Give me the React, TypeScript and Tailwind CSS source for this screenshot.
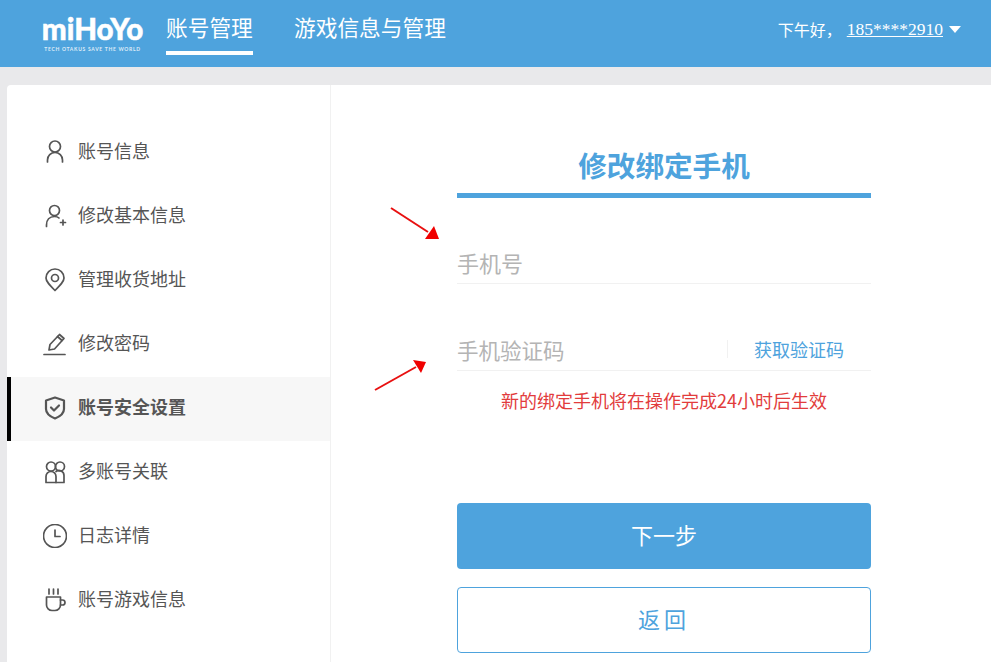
import type { ReactNode } from "react";

const cjk = "font-['Noto_Sans_CJK_SC','Noto_Sans',sans-serif]";

function Icon({ children }: { children: ReactNode }) {
  return (
    <svg
      className="w-6 h-6 shrink-0 text-[#555]"
      viewBox="0 0 24 24"
      fill="none"
      stroke="currentColor"
      strokeWidth="1.7"
      strokeLinecap="round"
      strokeLinejoin="round"
    >
      {children}
    </svg>
  );
}

const navItems: { label: string; active?: boolean; icon: ReactNode }[] = [
  {
    label: "账号信息",
    icon: (
      <>
        <circle cx="12" cy="6.5" r="5.5" />
        <path d="M4.5 22v-2a7.5 7.5 0 0 1 15 0v2" />
      </>
    ),
  },
  {
    label: "修改基本信息",
    icon: (
      <>
        <circle cx="11.5" cy="6.5" r="5" />
        <path d="M3.5 22.5v-1.5c0-5 3-8.5 8-8.5 2 0 3.5.5 4.5 1.5" />
        <path d="M17.5 18.5h5M20 16v5" />
      </>
    ),
  },
  {
    label: "管理收货地址",
    icon: (
      <>
        <path d="M12 22.5C6.5 17 3 13.5 3 10a9 9 0 0 1 18 0c0 3.5-3.5 7-9 12.5z" />
        <circle cx="12" cy="10" r="3.5" />
      </>
    ),
  },
  {
    label: "修改密码",
    icon: (
      <>
        <path d="M1 22.5h21" />
        <path d="M6 18l1-5.500L16.500 2.500l4.500 4-9.500 10.500z" />
        <path d="M14.500 4.500l4.500 4" />
      </>
    ),
  },
  {
    label: "账号安全设置",
    active: true,
    icon: (
      <g strokeWidth="2.2">
        <path d="M12 1.500l9 3v8.500c0 4.500-4 7.500-9 9.500-5-2-9-5-9-9.500V4.500z" />
        <path d="M8 11.500l3 3 5-5" />
      </g>
    ),
  },
  {
    label: "多账号关联",
    icon: (
      <>
        <circle cx="8" cy="6.500" r="4.500" />
        <circle cx="17" cy="6.500" r="4.500" />
        <path d="M3 22.500v-6a5 5 0 0 1 10 0v6z" />
        <path d="M13 11.500a5 5 0 0 1 8 4v7h-8" />
      </>
    ),
  },
  {
    label: "日志详情",
    icon: (
      <>
        <circle cx="12" cy="12" r="11.5" />
        <path d="M12 6v6.5h5" />
      </>
    ),
  },
  {
    label: "账号游戏信息",
    icon: (
      <>
        <path d="M3.5 9h14v8a5.5 5.5 0 0 1-5.500 5.500H9A5.500 5.500 0 0 1 3.500 17z" />
        <path d="M17.500 12h2a2 2 0 0 1 0 5h-2" />
        <path d="M6 1v5M10.500 1v5M15 1v5" />
      </>
    ),
  },
];

function NavRow({ label, icon, active }: { label: string; icon: ReactNode; active?: boolean }) {
  return (
    <li
      className={`h-16 flex items-center pb-[2px] gap-[11px] text-[18px] text-[#555] ${
        active ? "bg-[#f7f7f7] border-l-4 border-black pl-[32px] font-bold" : "pl-[36px]"
      }`}
    >
      {icon}
      <span className="mb-[4px]">{label}</span>
    </li>
  );
}

function Logo() {
  return (
    <div className="w-[99px] flex flex-col items-center text-white">
      <span className="font-['Lato',sans-serif] font-black text-[29.5px] leading-[29px] [-webkit-text-stroke:0.5px_white]">
        miHoYo
      </span>
      <span className="mt-[4px] font-['Lato',sans-serif] font-bold text-[5px] leading-[5px] tracking-[0.7px] whitespace-nowrap opacity-80">
        TECH OTAKUS SAVE THE WORLD
      </span>
    </div>
  );
}

export default function App() {
  return (
    <div className={`w-[991px] h-[662px] overflow-hidden bg-[#e9e9eb] ${cjk}`}>
      {/* Header */}
      <header className="h-[67px] bg-[#4ea3dd] flex items-start text-white pl-[43px] pr-[30px]">
        <div className="mt-[14px]">
          <Logo />
        </div>
        <nav className="flex ml-[24px] text-[21.7px] gap-[41px]">
          <div className="flex flex-col w-[87px] whitespace-nowrap">
            <span className="leading-[30px] mt-[12px]">账号管理</span>
            <span className="h-1 bg-white mt-[9px]" />
          </div>
          <span className="leading-[30px] mt-[12px] whitespace-nowrap">游戏信息与管理</span>
        </nav>
        <div className="ml-auto flex items-center mt-[17px] h-6">
          <span className="text-[16px]">下午好，</span>
          <span className="underline font-['Liberation_Serif',serif] text-[17.5px] ml-[5px]">185****2910</span>
          <span className="ml-[6px] w-0 h-0 border-x-[6px] border-x-transparent border-t-[7px] border-t-white" />
        </div>
      </header>

      {/* Card */}
      <div className="mt-[18px] ml-[7px] h-[577px] bg-white rounded-tl-[4px] flex">
        <aside className="w-[324px] shrink-0 border-r border-[#f1f1f1] pt-9">
          <ul>
            {navItems.map((item) => (
              <NavRow key={item.label} label={item.label} active={item.active} icon={<Icon>{item.icon}</Icon>} />
            ))}
          </ul>
        </aside>

        <main className="relative flex-1">
          {/* red annotation arrows */}
          <svg className="absolute left-[50px] top-[115px] w-[60px] h-[40px]" viewBox="0 0 60 40" fill="#f00000">
            <path d="M10 8L47 32" stroke="#e81010" strokeWidth="2" />
            <path d="M58 39H44L53 26z" />
          </svg>
          <svg className="absolute left-[40px] top-[270px] w-[60px] h-[40px]" viewBox="0 0 60 40" fill="#f00000">
            <path d="M4 35L45 12" stroke="#e81010" strokeWidth="2" />
            <path d="M55 7L42 5L50 18z" />
          </svg>

          <div className="w-[414px] ml-[126px]">
            <h1 className="mt-[55px] h-[53px] text-center text-[28.6px] leading-[50px] font-bold text-[#4ea3dd]">
              修改绑定手机
            </h1>
            <div className="h-[5px] bg-[#4ea3dd]" />

            <div className="h-[86px] border-b border-[#f1f1f1] flex items-end pb-[5px]">
              <span className="text-[22px] leading-[32px] text-[#b4b4b4]">手机号</span>
            </div>

            <div className="h-[87px] border-b border-[#f1f1f1] flex items-end pb-[4px]">
              <span className="text-[21.5px] leading-[32px] text-[#b4b4b4]">手机验证码</span>
              <div className="ml-auto mb-[8px] w-[144px] h-[18px] pl-[26px] border-l border-[#f1f1f1] flex items-center">
                <span className="text-[18px] leading-[26px] text-[#4ea3dd] whitespace-nowrap">获取验证码</span>
              </div>
            </div>

            <p className="mt-[15px] text-center text-[18px] leading-[28px] text-[#e23c3c]">
              新的绑定手机将在操作完成24小时后生效
            </p>

            <button className="mt-[89px] w-full h-[66px] pb-[3px] rounded-[4px] bg-[#4ea3dd] text-white text-[22px]">
              下一步
            </button>
            <button className="mt-[18px] w-full h-[66px] pb-[3px] rounded-[4px] border border-[#4ea3dd] bg-white text-[#4ea3dd] text-[22px] tracking-[4px]">
              返回
            </button>
          </div>
        </main>
      </div>
    </div>
  );
}
